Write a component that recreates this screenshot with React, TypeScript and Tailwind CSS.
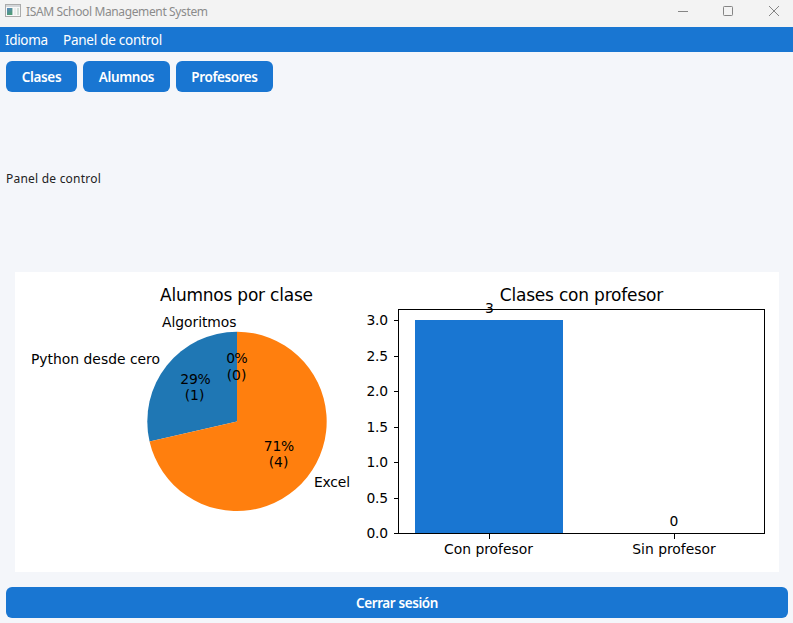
import React from 'react';

const tabs = [
  { label: 'Clases', box: 'w-[71px]', text: 'tracking-[-0.35px]' },
  { label: 'Alumnos', box: 'w-[87px]', text: 'tracking-[-0.4px]' },
  { label: 'Profesores', box: 'w-[97px]', text: 'tracking-[-0.4px]' },
];

const ticks = [
  { y: 320.5, label: '3.0' },
  { y: 356.5, label: '2.5' },
  { y: 391.5, label: '2.0' },
  { y: 427.5, label: '1.5' },
  { y: 462.5, label: '1.0' },
  { y: 498.5, label: '0.5' },
  { y: 533.5, label: '0.0' },
];

function TitleBar() {
  return (
    <header className="flex h-[27px] shrink-0 items-start bg-[#f3f3f3] pl-[5px] text-[#8b8b8b]">
      <svg className="mt-1 h-[14px] w-4 shrink-0" viewBox="0 0 16 14" shapeRendering="crispEdges">
        <defs>
          <linearGradient id="pane" x1="0" y1="0" x2="0.4" y2="1">
            <stop offset="0" stopColor="#5b86bd" />
            <stop offset="1" stopColor="#4f9c76" />
          </linearGradient>
        </defs>
        <rect x="0.5" y="0.5" width="15" height="12" fill="#f8f8f8" stroke="#ababab" />
        <rect x="1" y="1" width="14" height="2" fill="#d3d6d9" />
        <rect x="2" y="4" width="5" height="7" fill="url(#pane)" />
        <rect x="7" y="4" width="1" height="7" fill="#b5cfc8" />
        <rect x="9" y="4" width="2" height="7" fill="#eceeed" />
        <rect x="12" y="4" width="2" height="7" fill="#d3dfd8" />
      </svg>
      <h1 className="ml-[5px] mt-[3px] whitespace-nowrap text-[12px] leading-[18px] tracking-[-0.37px]">
        ISAM School Management System
      </h1>
      <svg className="ml-auto h-[27px] w-[133px] shrink-0" viewBox="660 0 133 27" fill="none" stroke="#858585">
        <path d="M678 11.5h10" />
        <rect x="723.5" y="6.5" width="9" height="9" rx="0.8" />
        <path d="M769 6l10 10M779 6l-10 10" />
      </svg>
    </header>
  );
}

function Charts() {
  return (
    <svg
      className="block h-[300px] w-[764px] bg-white font-['DejaVu_Sans',sans-serif] text-[13.89px]"
      viewBox="15 272 764 300"
      textAnchor="middle"
    >
      <text x="236.5" y="301" fontSize="17" textLength="153">Alumnos por clase</text>
      <path d="M237 421.5V331.7A89.7 89.7 0 0 0 149.55 441.46Z" fill="#1f77b4" />
      <path d="M237 421.5L149.55 441.46A89.7 89.7 0 1 0 237 331.7Z" fill="#ff7f0e" />
      <text x="236.5" y="327" textAnchor="end" textLength="74.5">Algoritmos</text>
      <text x="160" y="364" textAnchor="end" textLength="129">Python desde cero</text>
      <text x="314" y="487" textAnchor="start" textLength="36">Excel</text>
      <text x="237" y="363" textLength="21.5">0%</text>
      <text x="236.5" y="380">(0)</text>
      <text x="195.5" y="384" textLength="30.5">29%</text>
      <text x="194.5" y="400">(1)</text>
      <text x="279" y="451" textLength="30.5">71%</text>
      <text x="278.5" y="467">(4)</text>

      <text x="581.5" y="301" fontSize="17" textLength="163.5">Clases con profesor</text>
      <rect x="415" y="320" width="148" height="213.5" fill="#1976d2" />
      <g fill="none" stroke="#000" strokeWidth="1.1" shapeRendering="crispEdges">
        <rect x="398.5" y="309.5" width="366" height="224" />
        {ticks.map((t) => (
          <path key={t.label} d={`M393.5 ${t.y}H398`} />
        ))}
        <path d="M489.5 534v4.5M674.5 534v4.5" />
      </g>
      {ticks.map((t) => (
        <text key={t.label} x="388" y={t.y + 4.5} textAnchor="end" textLength="21.5">{t.label}</text>
      ))}
      <text x="489.5" y="313">3</text>
      <text x="674" y="526">0</text>
      <text x="488.5" y="554">Con profesor</text>
      <text x="674" y="554">Sin profesor</text>
    </svg>
  );
}

export default function App() {
  return (
    <div className="flex h-[623px] w-[793px] flex-col overflow-hidden bg-[#f4f6fa] font-['Noto_Sans','Open_Sans',sans-serif]">
      <TitleBar />
      <nav className="flex h-[25px] shrink-0 items-center gap-4 bg-[#1976d2] pl-[5px] pt-[2px] text-[13.5px] text-white">
        <span className="w-[42px] whitespace-nowrap tracking-[-0.35px]">Idioma</span>
        <span className="whitespace-nowrap tracking-[-0.25px]">Panel de control</span>
      </nav>
      <main className="flex flex-1 flex-col pl-1.5 pr-[5px] pt-[9px]">
        <div className="flex gap-1.5">
          {tabs.map((t) => (
            <button
              key={t.label}
              className={`flex h-[31px] items-center justify-center whitespace-nowrap rounded-md bg-[#1976d2] pt-[2px] text-[13.5px] font-semibold text-white ${t.box} ${t.text}`}
            >
              {t.label}
            </button>
          ))}
        </div>
        <div className="flex h-[171px] items-center pt-[2px] text-[12px] tracking-[0.22px] text-[#222]">Panel de control</div>
        <section className="ml-[9px] mt-[9px]">
          <Charts />
        </section>
        <button className="mt-[15px] flex h-[31px] w-full items-center justify-center rounded-md bg-[#1976d2] pt-[2px] text-[13.5px] font-semibold tracking-[-0.4px] text-white">
          Cerrar sesión
        </button>
      </main>
    </div>
  );
}
